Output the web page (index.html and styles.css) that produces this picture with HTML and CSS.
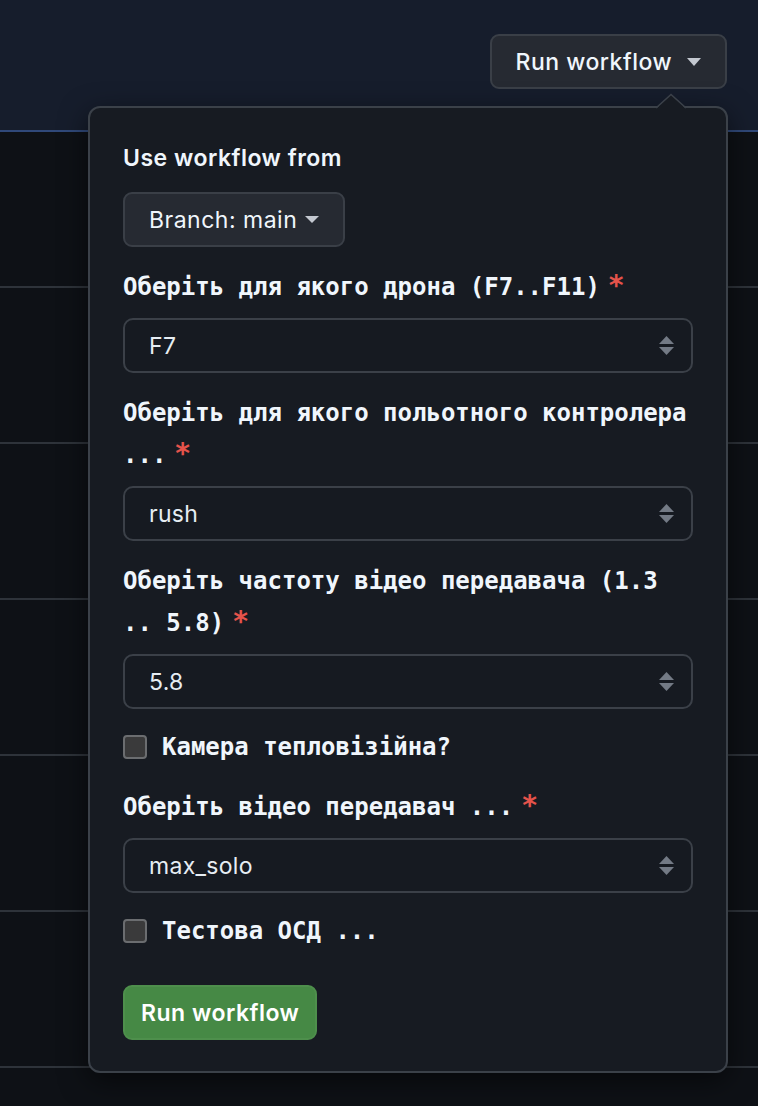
FILE: index.html
```html
<!DOCTYPE html>
<html lang="uk">
<head>
<meta charset="utf-8">
<title>Run workflow</title>
<link rel="stylesheet" href="styles.css">
</head>
<body>
<header class="topbar">
  <button class="btn btn-top">Run workflow<span class="caret caret-top"></span></button>
</header>
<div class="list">
  <div class="row"></div>
  <div class="row"></div>
  <div class="row"></div>
  <div class="row"></div>
  <div class="row"></div>
  <div class="row"></div>
</div>

<div class="panel">
  <svg class="pointer" width="30" height="16" viewBox="0 0 30 16"><polygon points="0,16 15,1.5 30,16" fill="#171b22"/><polyline points="0,15 15,1.5 30,15" fill="none" stroke="#3b4149" stroke-width="1.6"/></svg>
  <div class="title">Use workflow from</div>
  <div><button class="btn btn-branch">Branch: main<span class="caret caret-branch"></span></button></div>

  <div class="field">
    <div class="label"><span>Оберіть для якого дрона (F7..F11)</span><span class="req">*</span></div>
    <div class="select"><span>F7</span><svg class="updown" width="15" height="19" viewBox="0 0 15 19"><polygon points="7.5,0 15,8 0,8"/><polygon points="0,11 15,11 7.5,19"/></svg></div>
  </div>

  <div class="field">
    <div class="label"><span>Оберіть для якого польотного контролера</span> <span>...</span><span class="req">*</span></div>
    <div class="select"><span>rush</span><svg class="updown" width="15" height="19" viewBox="0 0 15 19"><polygon points="7.5,0 15,8 0,8"/><polygon points="0,11 15,11 7.5,19"/></svg></div>
  </div>

  <div class="field">
    <div class="label"><span>Оберіть частоту відео передавача (1.3</span> <span>.. 5.8)</span><span class="req">*</span></div>
    <div class="select"><span>5.8</span><svg class="updown" width="15" height="19" viewBox="0 0 15 19"><polygon points="7.5,0 15,8 0,8"/><polygon points="0,11 15,11 7.5,19"/></svg></div>
  </div>

  <label class="check"><span class="box"></span><span class="check-text">Камера тепловізійна?</span></label>

  <div class="field field-tight">
    <div class="label"><span>Оберіть відео передавач ...</span><span class="req">*</span></div>
    <div class="select"><span>max_solo</span><svg class="updown" width="15" height="19" viewBox="0 0 15 19"><polygon points="7.5,0 15,8 0,8"/><polygon points="0,11 15,11 7.5,19"/></svg></div>
  </div>

  <label class="check"><span class="box"></span><span class="check-text">Тестова ОСД ...</span></label>

  <div><button class="btn btn-run">Run workflow</button></div>
</div>
</body>
</html>
```

FILE: styles.css
```css
* { box-sizing: border-box; }

html, body {
  margin: 0;
  padding: 0;
}

body {
  width: 758px;
  height: 1106px;
  overflow: hidden;
  position: relative;
  background: #0e1116;
  color: #f0f6fc;
  font-family: Inter, "Noto Sans", "Liberation Sans", sans-serif;
}

.topbar {
  height: 132px;
  background: #161d2c;
  border-bottom: 2px solid #30497a;
  display: flex;
  justify-content: flex-end;
  align-items: flex-start;
  padding: 34px 31px 0 0;
}

.btn {
  display: inline-flex;
  align-items: center;
  height: 55px;
  margin: 0;
  border-radius: 9px;
  border: 2px solid #3a3f47;
  background: #262a32;
  color: #f0f6fc;
  font-family: Inter, "Noto Sans", "Liberation Sans", sans-serif;
  font-size: 23px;
  letter-spacing: 0.5px;
  font-weight: 500;
  padding: 0 24px;
  white-space: nowrap;
}

.caret {
  display: inline-block;
  width: 0;
  height: 0;
  border-left: 7.5px solid transparent;
  border-right: 7.5px solid transparent;
  border-top: 8px solid #c3c8d0;
}

.caret-top { margin-left: 15px; }
.caret-branch { margin-left: 8px; border-top-width: 7px; }

.row {
  height: 156px;
  border-bottom: 2px solid #2e333a;
}

.panel {
  position: absolute;
  left: 88px;
  top: 106px;
  width: 640px;
  height: 967px;
  border: 2px solid #3b4149;
  border-radius: 12px;
  background: #171b22;
  padding: 33px 33px 0 33px;
  box-shadow: 0 8px 28px rgba(0, 0, 0, 0.55);
  display: flex;
  flex-direction: column;
}

.pointer {
  position: absolute;
  top: -15px;
  left: 566px;
  display: block;
}

.title {
  font-size: 23px;
  letter-spacing: 0.5px;
  font-weight: 600;
  line-height: 34px;
}

.btn-branch {
  margin-top: 17px;
  font-weight: 400;
}

.field { margin-top: 19px; }
.field-tight { margin-top: 18px; }

.label {
  font-family: "DejaVu Sans Mono", "Liberation Mono", monospace;
  font-weight: bold;
  font-size: 24px;
  line-height: 42px;
}

.req {
  color: #e5534b;
  margin-left: 8px;
  font-size: 28px;
  line-height: 1;
}

.select {
  margin-top: 10px;
  height: 55px;
  border: 2px solid #3b4048;
  border-radius: 10px;
  background: #161a21;
  display: flex;
  align-items: center;
  justify-content: space-between;
  padding: 0 17px 0 24px;
  font-size: 23px;
  letter-spacing: 0.3px;
  color: #e6edf3;
}

.updown { fill: #737a85; display: block; }

.check {
  margin-top: 17px;
  height: 42px;
  display: flex;
  align-items: center;
}

.box {
  width: 24px;
  height: 24px;
  border: 2px solid #6b6d70;
  border-radius: 4px;
  background: #3a3a3b;
  flex: none;
}

.check-text {
  margin-left: 15px;
  font-family: "DejaVu Sans Mono", "Liberation Mono", monospace;
  font-weight: bold;
  font-size: 24px;
}

.btn-run {
  margin-top: 33px;
  background: #468945;
  border-color: #4e8f4c;
  color: #ffffff;
  font-weight: 600;
  padding: 0 16px;
}
```
